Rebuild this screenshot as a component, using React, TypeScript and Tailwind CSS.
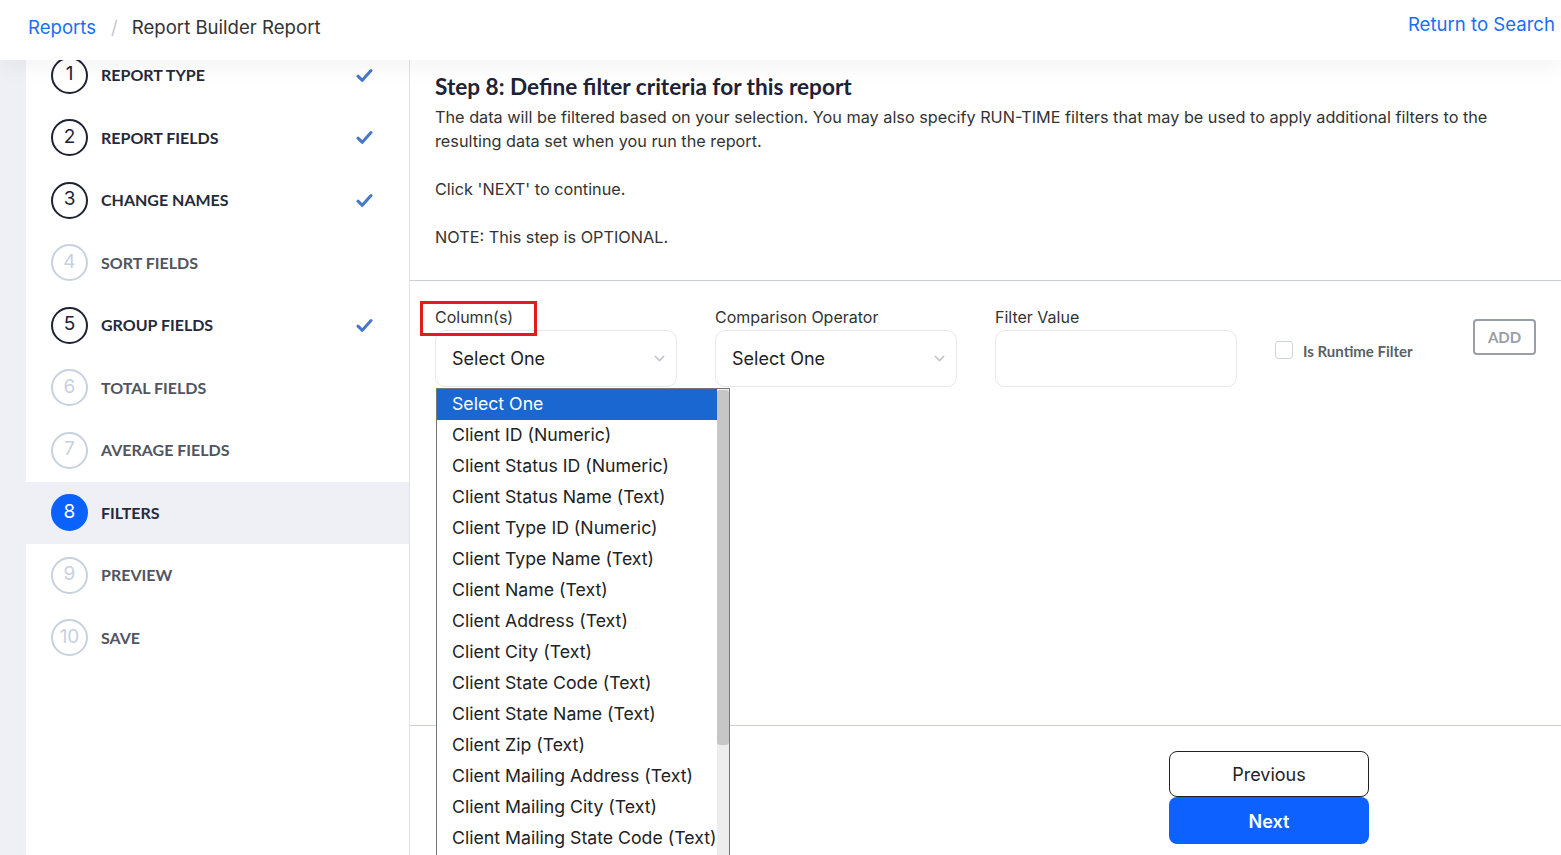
import React from "react";
import { ChevronDown } from "lucide-react";

type Step = { n: number; label: string; state: "done" | "pending" | "active" };

const steps: Step[] = [
  { n: 1, label: "REPORT TYPE", state: "done" },
  { n: 2, label: "REPORT FIELDS", state: "done" },
  { n: 3, label: "CHANGE NAMES", state: "done" },
  { n: 4, label: "SORT FIELDS", state: "pending" },
  { n: 5, label: "GROUP FIELDS", state: "done" },
  { n: 6, label: "TOTAL FIELDS", state: "pending" },
  { n: 7, label: "AVERAGE FIELDS", state: "pending" },
  { n: 8, label: "FILTERS", state: "active" },
  { n: 9, label: "PREVIEW", state: "pending" },
  { n: 10, label: "SAVE", state: "pending" },
];

const options = [
  "Select One",
  "Client ID (Numeric)",
  "Client Status ID (Numeric)",
  "Client Status Name (Text)",
  "Client Type ID (Numeric)",
  "Client Type Name (Text)",
  "Client Name (Text)",
  "Client Address (Text)",
  "Client City (Text)",
  "Client State Code (Text)",
  "Client State Name (Text)",
  "Client Zip (Text)",
  "Client Mailing Address (Text)",
  "Client Mailing City (Text)",
  "Client Mailing State Code (Text)",
];

function Check() {
  return (
    <svg width="17" height="15" viewBox="0 0 17 15" className="mr-[36px]">
      <path d="M2 8.2 L6.3 12.3 L15 2.6" fill="none" stroke="#4677c9" strokeWidth="3" strokeLinecap="round" strokeLinejoin="round" />
    </svg>
  );
}

function StepRow({ s }: { s: Step }) {
  const circle =
    s.state === "active"
      ? "bg-[#0a62fd] border-[#0a62fd] text-white"
      : s.state === "done"
      ? "border-[#1e2235] text-[#1e2235]"
      : "border-[#c8d1df] text-[#c8d1df]";
  const text = s.state === "pending" ? "text-[#50555f]" : "text-[#252a3a]";
  return (
    <div className={`h-[62.5px] flex items-center pl-[25px] ${s.state === "active" ? "bg-[#eef0f5]" : ""}`}>
      <div className={`w-[37px] h-[37px] shrink-0 rounded-full border-2 flex items-center justify-center text-[19px] font-['Inter',sans-serif] ${circle}`}>
        <span className="-mt-[2px]">{s.n}</span>
      </div>
      <span className={`ml-[13px] flex-1 font-['Lato',sans-serif] font-bold text-[16px] ${text}`}>{s.label}</span>
      {s.state === "done" && <Check />}
    </div>
  );
}

function SelectBox() {
  return (
    <div className="mt-[2px] h-[57px] w-[242px] rounded-[10px] border border-[#e6e8ec] bg-white flex items-center justify-between pl-[16px] pr-[8px]">
      <span className="text-[18px] text-[#222]">Select One</span>
      <ChevronDown size={17} color="#c3c7cf" strokeWidth={2.2} />
    </div>
  );
}

export default function App() {
  return (
    <div className="w-[1561px] h-[855px] overflow-hidden bg-white flex flex-col font-['Inter',sans-serif]">
      <header className="relative z-10 h-[60px] shrink-0 flex items-start justify-between pl-[28px] pr-[6px] bg-white shadow-[0_8px_22px_rgba(0,0,0,0.045)]">
        <div className="flex items-center text-[18.6px] leading-[27px] pt-[14px]">
          <span className="text-[#1a6ef5]">Reports</span>
          <span className="ml-[15px] mr-[14px] text-[#c5c9d0]">/</span>
          <span className="text-[#333]">Report Builder Report</span>
        </div>
        <span className="text-[#1a6ef5] text-[18.6px] leading-[27px] pt-[11px]">Return to Search</span>
      </header>

      <div className="flex flex-1 min-h-0">
        <div className="w-[26px] shrink-0 bg-[#eef0f5]" />
        <aside className="w-[384px] shrink-0 border-r border-[#dfe3e8] bg-white overflow-hidden">
          <div className="-mt-[16px]">
            {steps.map((s) => (
              <StepRow key={s.n} s={s} />
            ))}
          </div>
        </aside>

        <main className="flex-1 flex flex-col min-w-0">
          <div className="pl-[25px] pr-[40px] pt-[12px] pb-[31px]">
            <h1 className="font-['Lato',sans-serif] font-bold text-[22.6px] leading-[30px] text-[#1e2235]">
              Step 8: Define filter criteria for this report
            </h1>
            <p className="mt-[3px] text-[16.25px] leading-[24px] text-[#333]">
              The data will be filtered based on your selection. You may also specify RUN-TIME filters that may be used to apply additional filters to the resulting data set when you run the report.
              <br />
              <br />
              Click 'NEXT' to continue.
              <br />
              <br />
              NOTE: This step is OPTIONAL.
            </p>
          </div>

          <section className="relative h-[445px] shrink-0 border-t border-[#c8d0da] pt-[25px] pl-[25px]">
            <div className="flex items-start">
              <div className="w-[242px]">
                <div className="text-[16px] leading-[22px] text-[#333]">Column(s)</div>
                <SelectBox />
              </div>
              <div className="w-[242px] ml-[38px]">
                <div className="text-[16px] leading-[22px] text-[#333]">Comparison Operator</div>
                <SelectBox />
              </div>
              <div className="w-[242px] ml-[38px]">
                <div className="text-[16px] leading-[22px] text-[#333]">Filter Value</div>
                <div className="mt-[2px] h-[57px] w-[242px] rounded-[10px] border border-[#e6e8ec] bg-white" />
              </div>
              <div className="w-[198px] ml-[38px] mt-[32px] flex items-center">
                <div className="w-[18px] h-[18px] shrink-0 rounded-[3px] border border-[#cfd3da] bg-white" />
                <span className="ml-[10px] font-['Lato',sans-serif] font-bold text-[15px] text-[#5a5f68] mt-[2px]">Is Runtime Filter</span>
              </div>
              <div className="mt-[13px] w-[63px] h-[36px] rounded-[4px] border-2 border-[#9a9ea6] flex items-center justify-center font-['Lato',sans-serif] font-bold text-[15px] text-[#9a9ea6]">
                ADD
              </div>
            </div>

            <div className="absolute left-[10px] top-[20px] w-[117px] h-[35px] border-[3px] border-[#e21b1b] pointer-events-none" />

            <div className="absolute z-20 left-[26px] top-[107px] w-[294px] h-[480px] border border-[#767676] bg-white flex">
              <div className="flex-1 min-w-0 overflow-hidden">
                {options.map((o, i) => (
                  <div
                    key={o}
                    className={`h-[31px] leading-[30px] pl-[15px] text-[17.7px] whitespace-nowrap ${i === 0 ? "bg-[#1a67d2] text-white" : "text-[#222]"}`}
                  >
                    {o}
                  </div>
                ))}
              </div>
              <div className="w-[12px] shrink-0 bg-[#ededed] flex flex-col pt-[1px]">
                <div className="h-[355px] bg-[#c6c6c6] rounded-[3px]" />
              </div>
            </div>
          </section>

          <footer className="flex-1 border-t border-[#c8d0da] pt-[25px] pl-[759px]">
            <div className="w-[200px] flex flex-col">
              <div className="h-[46px] rounded-[8px] border border-[#222] flex items-center justify-center text-[18px] text-[#222]">
                Previous
              </div>
              <div className="h-[47px] rounded-[8px] bg-[#0d62ff] flex items-center justify-center text-[18px] font-semibold text-white pt-[1px]">
                Next
              </div>
            </div>
          </footer>
        </main>
      </div>
    </div>
  );
}
